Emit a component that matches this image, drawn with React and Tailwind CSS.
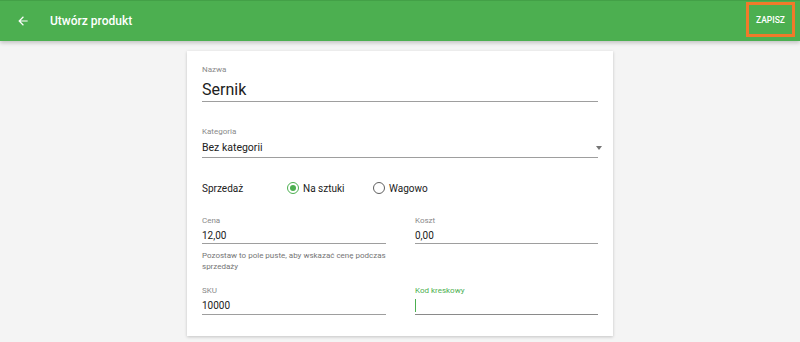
import React, { useState } from 'react';

function Label({ children, green }) {
    return (
        <div className={`text-[8px] leading-[12px] ${green ? 'text-[#4caf50]' : 'text-[#8a8a8a]'}`}>
            {children}
        </div>
    );
}

function Radio({ checked, label, onClick }) {
    return (
        <button onClick={onClick} className="flex items-center w-[86px] h-[20px]">
            <span
                className={`w-[12px] h-[12px] rounded-full border-[1.5px] flex items-center justify-center ${
                    checked ? 'border-[#4caf50]' : 'border-[#5f5f5f]'
                }`}
            >
                {checked && <span className="w-[6px] h-[6px] rounded-full bg-[#4caf50]" />}
            </span>
            <span className="ml-[4px] text-[10px] text-[#212121]">{label}</span>
        </button>
    );
}

export default function App() {
    const [mode, setMode] = useState('szt');

    return (
        <div className="min-h-[342px] bg-[#f4f4f4] font-['Roboto',sans-serif]">
            <div className="h-[41px] bg-[#4caf50] border-t border-[#43a047] flex items-center shadow-[0_2px_4px_rgba(0,0,0,0.2)]">
                <svg className="ml-[16px]" width="14" height="14" viewBox="0 0 24 24" fill="#fff">
                    <path d="M20 11H7.83l5.59-5.59L12 4l-8 8 8 8 1.41-1.41L7.83 13H20v-2z" />
                </svg>
                <div className="ml-[20px] text-white text-[12px] font-medium">Utwórz produkt</div>
                <button className="ml-auto mr-[5px] self-start mt-[1px] w-[49px] h-[35px] border-[3px] border-[#f07a2a] flex items-center justify-center pt-[2px] text-white text-[8.5px] font-medium">
                    ZAPISZ
                </button>
            </div>

            <div className="mt-[10px] mx-auto w-[426px] bg-white shadow-[0_1px_3px_rgba(0,0,0,0.2)] px-[15px] pt-[13px] pb-[21px] text-[#212121]">
                <Label>Nazwa</Label>
                <div className="h-[26px] pt-[3px] text-[16px] leading-[22px] border-b border-[#9e9e9e]">Sernik</div>

                <div className="mt-[24px]">
                    <Label>Kategoria</Label>
                    <div className="flex items-center justify-between h-[20px] text-[10.5px] leading-[19px] border-b border-[#9e9e9e]">
                        <span>Bez kategorii</span>
                        <span className="mr-[-4px] w-0 h-0 border-l-[3.5px] border-r-[3.5px] border-t-[4px] border-l-transparent border-r-transparent border-t-[#757575]" />
                    </div>
                </div>

                <div className="mt-[20px] flex items-center h-[20px]">
                    <div className="w-[85px] text-[10px]">Sprzedaż</div>
                    <Radio checked={mode === 'szt'} label="Na sztuki" onClick={() => setMode('szt')} />
                    <Radio checked={mode === 'wag'} label="Wagowo" onClick={() => setMode('wag')} />
                </div>

                <div className="grid grid-cols-[184px_183px] gap-x-[29px] items-start">
                    <div className="mt-[17px]">
                        <Label>Cena</Label>
                        <div className="h-[17px] pt-[1px] text-[10px] leading-[15px] border-b border-[#9e9e9e]">12,00</div>
                        <div className="mt-[6px] text-[8px] leading-[11px] text-[#757575]">
                            Pozostaw to pole puste, aby wskazać cenę podczas sprzedaży
                        </div>
                    </div>
                    <div className="mt-[17px]">
                        <Label>Koszt</Label>
                        <div className="h-[17px] pt-[1px] text-[10px] leading-[15px] border-b border-[#9e9e9e]">0,00</div>
                    </div>

                    <div className="mt-[13px]">
                        <Label>SKU</Label>
                        <div className="h-[18px] pt-[1px] text-[10px] leading-[16px] border-b border-[#9e9e9e]">10000</div>
                    </div>
                    <div className="mt-[13px]">
                        <Label green>Kod kreskowy</Label>
                        <div className="h-[18px] pt-[2px] border-b-[1.5px] border-[#8a8a8a]">
                            <div className="w-px h-[13px] bg-[#4caf50]" />
                        </div>
                    </div>
                </div>
            </div>
        </div>
    );
}
